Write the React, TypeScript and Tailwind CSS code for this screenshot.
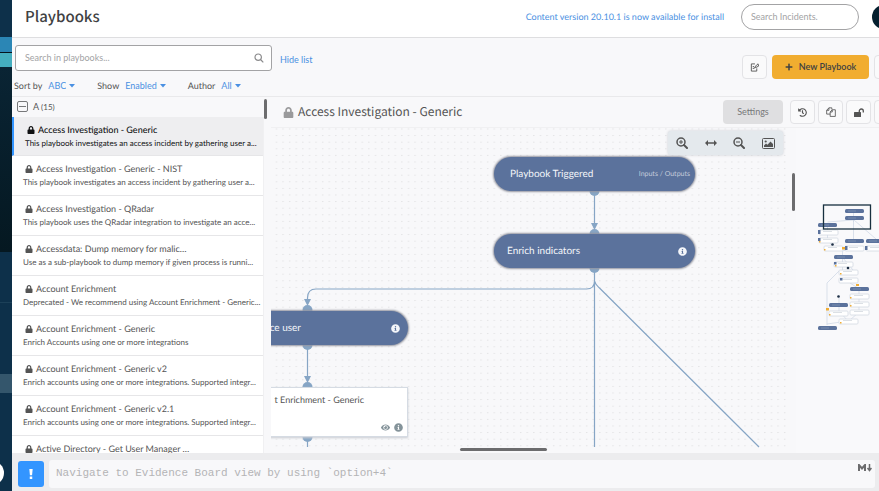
import { FaLock, FaHistory, FaPlus, FaInfoCircle, FaEye } from "react-icons/fa";
import type { ReactNode } from "react";

const playbooks = [
  { name: "Access Investigation - Generic", text: "This playbook investigates an access incident by gathering user a..." },
  { name: "Access Investigation - Generic - NIST", text: "This playbook investigates an access incident by gathering user a..." },
  { name: "Access Investigation - QRadar", text: "This playbook uses the QRadar integration to investigate an acce..." },
  { name: "Accessdata: Dump memory for malic…", text: "Use as a sub-playbook to dump memory if given process is runni..." },
  { name: "Account Enrichment", text: "Deprecated - We recommend using Account Enrichment - Generic..." },
  { name: "Account Enrichment - Generic", text: "Enrich Accounts using one or more integrations" },
  { name: "Account Enrichment - Generic v2", text: "Enrich accounts using one or more integrations. Supported integr..." },
  { name: "Account Enrichment - Generic v2.1", text: "Enrich accounts using one or more integrations. Supported integr..." },
  { name: "Active Directory - Get User Manager …", text: "" },
];

function Filter({ label, value, options }: { label: string; value: string; options: string[] }) {
  return (
    <label className="flex items-center gap-[6px] whitespace-nowrap">
      {label}
      <span className="flex items-center gap-[3px] text-[#4a90e2]">
        <select defaultValue={value} className="cursor-pointer appearance-none bg-transparent [field-sizing:content]">
          {options.map((o) => (
            <option key={o}>{o}</option>
          ))}
        </select>
        <svg viewBox="0 0 6 4" className="h-1 w-[6px]" fill="currentColor" aria-hidden="true">
          <path d="M0 0h6L3 3.600z" />
        </svg>
      </span>
    </label>
  );
}

function IconButton({ label, children }: { label: string; children: ReactNode }) {
  return (
    <button aria-label={label} className="flex h-6 w-[25px] shrink-0 items-center justify-center rounded-sm border border-[#e3e3e6] bg-[#fafafb] text-[#545454]">
      {children}
    </button>
  );
}

function Magnifier({ plus }: { plus?: boolean }) {
  return (
    <svg viewBox="0 0 12 12" className="size-3" fill="none" stroke="currentColor">
      <circle cx="5" cy="5" r="4" strokeWidth="1.5" />
      <path d="M8 8l3 3" strokeWidth="2" strokeLinecap="round" />
      <path d={plus ? "M3 5h4M5 3v4" : "M3 5h4"} />
    </svg>
  );
}

const miniBlue = [[845, 209], [845, 216], [818, 223], [845, 239], [866, 239], [834, 255], [850, 287], [829, 303], [818, 326]];
const miniWhite = [[819, 230], [819, 238], [824, 246], [845, 246], [866, 246], [834, 262], [839, 270], [839, 278], [850, 294], [850, 302], [850, 310], [829, 311], [839, 319]];

function MiniMap() {
  return (
    <svg viewBox="796 128 83 325" className="block h-[325px] w-[83px]" role="img" aria-label="Playbook overview">
      <g fill="none" stroke="#ccd6e4" strokeWidth="0.7">
        <path d="M853.500 210v12M827.500 225v15l5 6M853.500 220l-26 2M853.500 220v22M854 220l22 19M853.500 248l-11 3v20M843 258l10 12M839 271l-12 12v42M850 283l8 5M839 295v16l9 10-21 3M859 290v22l-10 9" />
      </g>
      {miniWhite.map(([x, y]) => (
        <g key={`${x}-${y}`}>
          <rect x={x} y={y} width="19" height="5" rx="1" fill="#fff" stroke="#d3d9e2" strokeWidth="0.8" />
          <path d={`M${x + 4} ${y + 1.5}h9`} stroke="#c5cbd3" strokeWidth="0.6" />
        </g>
      ))}
      {miniBlue.map(([x, y]) => (
        <g key={`${x}-${y}`}>
          <rect x={x} y={y} width="19" height="4" rx="1.5" fill="#5b729c" />
          <path d={`M${x + 3} ${y + 2}h8`} stroke="#8fa0be" strokeWidth="0.6" />
        </g>
      ))}
      <g fill="#5b729c">
        <rect x="818" y="230" width="2.5" height="4" />
        <rect x="818" y="238" width="2.5" height="3" />
        <rect x="845" y="246" width="2.5" height="4" />
        <rect x="865" y="246" width="2.5" height="4" />
        <rect x="834" y="262" width="2.5" height="2.5" />
        <rect x="840" y="278" width="2.5" height="2.5" />
      </g>
      <g fill="#f0ad35">
        <rect x="842" y="247" width="3" height="2.5" />
        <rect x="856" y="284" width="3" height="2" />
        <rect x="826" y="308" width="3" height="2.5" />
        <rect x="819" y="241" width="1.5" height="1.5" />
        <rect x="824" y="249" width="1.5" height="1.5" />
        <rect x="835" y="265" width="1.5" height="1.5" />
        <rect x="840" y="273" width="1.5" height="1.5" />
        <rect x="850" y="297" width="1.5" height="1.5" />
        <rect x="850" y="305" width="1.5" height="1.5" />
        <rect x="829" y="314" width="1.5" height="1.5" />
        <rect x="840" y="322" width="1.5" height="1.5" />
      </g>
      <g fill="#1d2f45">
        <circle cx="832.5" cy="244.5" r="1.3" />
        <circle cx="848" cy="268" r="1.3" />
        <circle cx="838.5" cy="296.5" r="1.3" />
      </g>
      <rect x="823.5" y="205" width="47" height="24" fill="none" stroke="#17303f" strokeWidth="1.3" />
    </svg>
  );
}

function Wires() {
  return (
    <svg viewBox="271 128 525 325" className="block h-[325px] w-[525px]" aria-hidden="true">
      <defs>
        <pattern id="dots" x="271" y="128.5" width="6.6" height="6.6" patternUnits="userSpaceOnUse">
          <rect x="5" y="0" width="1" height="1" fill="#d8d8da" />
        </pattern>
      </defs>
      <rect x="271" y="128" width="519" height="320" fill="url(#dots)" />
      <g fill="none" stroke="#86a5c5" strokeWidth="1.2">
        <path d="M594.5 190v38M594.5 267v180M594.5 281q0 8-8 8H316q-8.500 0-8.500 9v5M594.5 281c1 4 3 5 5 7L759 447M307.5 344v36M307.5 437v10" />
      </g>
      <g fill="#86a5c5">
        <path d="M591 223h7l-3.500 7zM304 299h7l-3.500 7zM304 376h7l-3.500 7z" />
        <circle cx="594.5" cy="191" r="5" />
        <circle cx="594.5" cy="234" r="5" />
        <circle cx="594.5" cy="268" r="5" />
        <circle cx="307.5" cy="310" r="5" />
        <circle cx="307.5" cy="345" r="5" />
        <circle cx="307.5" cy="387" r="5" />
        <circle cx="307.5" cy="437" r="5" />
      </g>
    </svg>
  );
}

export default function App() {
  return (
    <div className="flex h-screen overflow-hidden bg-[#f8f8fa] font-['Lato',sans-serif] text-[9px] leading-4 text-[#545454] [text-rendering:geometricPrecision]">
      <nav aria-label="Main" className="flex w-3 shrink-0 flex-col overflow-hidden bg-[#0d304a]">
        <div className="h-[37px]" />
        <div className="h-[15px] bg-[#2b86b5]" />
        <div className="h-px bg-[#06131d]" />
        <div className="h-[14px] bg-[#45aebf]" />
        <div className="h-[185px] bg-linear-to-b from-[#0a2434] to-[#051821]" />
        <div className="h-[51px] border-b border-[#1c4058]" />
        <div className="h-[71px]" />
        <div className="h-[19px] bg-[#34566c]" />
        <div className="mt-[68px] -ml-5 size-6 rounded-full bg-white" />
      </nav>

      <div className="flex min-w-0 flex-1 flex-col">
        <header className="flex h-[38px] shrink-0 items-center border-b border-[#dedee0] bg-white pb-1 pl-[13px]">
          <h1 className="flex-1 font-['Noto_Sans_CJK_SC',sans-serif] text-[15px] font-medium text-[#404142]">Playbooks</h1>
          <a href="#install" className="mr-[17px] text-[#4a90e2]">Content version 20.10.1 is now available for install</a>
          <input
            aria-label="Search Incidents"
            placeholder="Search Incidents."
            className="h-[26px] w-[118px] rounded-full border border-[#a3a3a5] px-[9px] placeholder:text-[#a3a3a5]"
          />
          <div className="ml-[13px] w-[7px] shrink-0 overflow-hidden">
            <div className="size-6 rounded-full bg-[#05202f]" />
          </div>
        </header>

        <section className="flex h-[59px] shrink-0 items-start border-b border-[#e9e9eb] pt-[7px]">
          <div className="ml-[3px] w-[257px]">
            <div className="flex h-[26px] items-center rounded-[3px] border border-[#a3a3a5] bg-white pr-[7px] pl-[9px]">
              <input aria-label="Search in playbooks" placeholder="Search in playbooks..." className="min-w-0 flex-1 outline-none placeholder:text-[#a3a3a5]" />
              <svg viewBox="0 0 10 10" className="size-[10px] text-[#8a8a8c]" fill="none" stroke="currentColor" strokeWidth="1.2">
                <circle cx="4.2" cy="4.2" r="3.2" />
                <path d="M6.5 6.5l2.800 2.800" />
              </svg>
            </div>
            <div className="-ml-px flex gap-[22px] pt-[7px]">
              <Filter label="Sort by" value="ABC" options={["ABC", "Date"]} />
              <Filter label="Show" value="Enabled" options={["Enabled", "All"]} />
              <Filter label="Author" value="All" options={["All", "Me"]} />
            </div>
          </div>
          <button className="mt-[7px] ml-2 text-[#4a90e2]">Hide list</button>
          <div className="mt-[10px] -mr-5 ml-auto flex gap-[5px]">
            <IconButton label="Edit report">
              <svg viewBox="0 0 10 10" className="size-[9px]" fill="none" stroke="currentColor">
                <path d="M5.5 1H1.500v8h6V6M3 4h1.500M3 6h2" />
                <path d="M5 5l2.500-3L9 1l.5 2.500L6.500 5z" />
              </svg>
            </IconButton>
            <button className="flex h-6 w-[97px] items-center justify-center gap-[6px] rounded-sm bg-[#f1ad30] font-semibold text-[#404142]">
              <FaPlus size={8} />
              New Playbook
            </button>
            <IconButton label="More">{null}</IconButton>
          </div>
        </section>

        <div className="flex min-h-0 flex-1">
          <aside className="relative w-[259px] shrink-0 overflow-hidden pr-[7px]">
            <button className="flex h-5 items-center gap-[5px] pb-px pl-[5px]">
              <span className="flex size-[11px] items-center justify-center rounded-[2px] border border-[#77787a]">
                <span className="h-px w-[7px] bg-[#77787a]" />
              </span>
              <span>A <span className="text-[8px]">(15)</span></span>
            </button>
            <ul className="border-r border-[#f0f0f2]">
              {playbooks.map((p, i) => (
                <li
                  key={p.name}
                  className={
                    i === 0
                      ? "h-[39px] border-b border-l-2 border-b-[#e6e6e8] border-l-[#3395ff] bg-[#eeeef0] pl-[11px] text-[#101112]"
                      : "h-10 border-b border-[#e6e6e8] bg-white pl-[11px]"
                  }
                >
                  <a href="#playbook" className="block pt-[5px] whitespace-nowrap">
                    <span className="flex items-center gap-[3px] pl-[2px]">
                      <FaLock size={8} className="shrink-0" />
                      <span className={i === 0 ? "font-medium" : ""}>{p.name}</span>
                    </span>
                    <span className="block text-[8px] leading-[10px]">{p.text}</span>
                  </a>
                </li>
              ))}
            </ul>
            <div className="absolute top-[2px] right-1 h-5 w-[3px] rounded-full bg-[#6c6c6e]" />
          </aside>

          <main className="flex min-w-0 flex-1 flex-col">
            <div className="-mr-5 flex h-[31px] shrink-0 items-center gap-[3px] border-b border-[#f0f0f2] pl-3">
              <FaLock size={11} className="text-[#9a9a9c]" />
              <h2 className="ml-px flex-1 font-['Noto_Sans_CJK_SC',sans-serif] text-[12px]">Access Investigation - Generic</h2>
              <button className="mr-1 h-6 w-[60px] rounded-sm bg-[#dfdfe1] text-[#77787a]">Settings</button>
              <IconButton label="History"><FaHistory size={9} /></IconButton>
              <IconButton label="Duplicate">
                <svg viewBox="0 0 12 12" className="size-[10px]" fill="none" stroke="currentColor">
                  <path d="M5 8.500H.8V4L3.500 1H7v2M3.500 1v3H.8M5 6l2.500-2.700h3.700v8H5zM7.500 3.500V6H5" />
                </svg>
              </IconButton>
              <IconButton label="Unlock">
                <svg viewBox="0 0 10 9" className="h-[9px] w-[10px]" fill="currentColor">
                  <rect x="0" y="4" width="7" height="5" rx="0.5" />
                  <path d="M5.300 4.500V3a2 2 0 0 1 4 0v1.500" fill="none" stroke="currentColor" strokeWidth="1.3" />
                </svg>
              </IconButton>
              <IconButton label="More actions">{null}</IconButton>
            </div>

            <div className="flex min-h-0 flex-1 overflow-hidden">
              <div className="relative min-w-0 flex-1 overflow-hidden">
                <Wires />
                <div className="absolute top-[29px] left-[223px] flex h-[34px] w-[201px] items-center justify-between rounded-full bg-[#5b729c] pr-[5px] pl-4 text-[#f4f6fa] shadow-[0_0_2px_1px_#9496a0]">
                  <span className="text-[10px]">Playbook Triggered</span>
                  <span className="text-[7px] text-[#c3cbdb]">Inputs / Outputs</span>
                </div>
                <div className="absolute top-[106px] left-[223px] flex h-[34px] w-[201px] items-center justify-between rounded-full bg-[#5b729c] pr-2 pl-[13px] text-[#f4f6fa] shadow-[0_0_2px_1px_#9496a0]">
                  <span className="text-[10px]">Enrich indicators</span>
                  <FaInfoCircle size={9} />
                </div>
                <div className="absolute top-[183px] left-[-64px] flex h-[34px] w-[201px] items-center justify-between rounded-full bg-[#5b729c] pr-2 text-[#f4f6fa] shadow-[0_0_2px_1px_#9496a0]">
                  <span className="w-[94px] text-right text-[10px] whitespace-nowrap">ce user</span>
                  <FaInfoCircle size={9} />
                </div>
                <div className="absolute top-[259px] left-[-64px] flex h-[50px] w-[201px] flex-col justify-between border border-[#d5dbe3] bg-white pt-1 pr-1 pb-1 shadow-[0_1px_2px_#c9ccd2]">
                  <span className="w-[156px] text-right">t Enrichment - Generic</span>
                  <span className="flex justify-end gap-1 text-[#84939a]">
                    <FaEye size={9} />
                    <FaInfoCircle size={9} />
                  </span>
                </div>
                <div className="absolute top-[3px] left-[397px] flex h-6 w-[115px] items-center justify-between rounded-[3px] bg-[#e4e9ed] px-2 text-[#545454] shadow-[0_0_3px_#c9ccd2]">
                  <button aria-label="Zoom in"><Magnifier plus /></button>
                  <button aria-label="Fit width">
                    <svg viewBox="0 0 12 6" className="h-[6px] w-3" fill="currentColor">
                      <path d="M0 3l3-3v2.200h6V0l3 3-3 3V3.800H3V6z" />
                    </svg>
                  </button>
                  <button aria-label="Zoom out"><Magnifier /></button>
                  <button aria-label="Save image">
                    <svg viewBox="0 0 13 11" className="h-[11px] w-[13px]" fill="currentColor">
                      <rect x="0.5" y="0.5" width="12" height="10" rx="1" fill="none" stroke="currentColor" />
                      <circle cx="3.7" cy="3.5" r="1.1" />
                      <path d="M2 9V7.500l2-2 1.500 1.300L8.500 3.500 11 6v3z" />
                    </svg>
                  </button>
                </div>
                <div className="absolute top-[45px] right-px h-[38px] w-[3px] rounded-full bg-[#6c6c6e]" />
                <div className="absolute top-[320px] left-[189px] h-[3px] w-[87px] rounded-full bg-[#6c6c6e]" />
              </div>
              <div className="w-[83px] shrink-0 bg-[#f9f9fb]">
                <MiniMap />
              </div>
            </div>
          </main>
        </div>

        <footer className="flex h-[38px] shrink-0 items-center gap-[5px] bg-[#ececee] pt-[6px] pr-1 pb-[3px] pl-[6px]">
          <button aria-label="Run command" className="flex h-[26px] w-[26px] shrink-0 items-center justify-center rounded-[3px] bg-[#3395ff] text-white">
            <svg viewBox="0 0 4 12" className="h-[10px] w-1" fill="currentColor">
              <path d="M0 0h4l-.7 7.500H.7zM.5 9h3v3h-3z" />
            </svg>
          </button>
          <div className="flex h-7 flex-1 rounded-[3px] bg-[#f8f8fa] pr-[3px] pl-[7px]">
            <input
              aria-label="Command line"
              placeholder="Navigate to Evidence Board view by using `option+4`"
              className="min-w-0 flex-1 pb-px font-['Liberation_Mono',monospace] text-[11px] outline-none placeholder:text-[#b4b4b6]"
            />
            <svg viewBox="0 0 14 8" className="mt-1 h-2 w-[14px] text-[#6c6c6e]" fill="none" stroke="currentColor" strokeWidth="2">
              <path d="M1 7V1l3 3.500L7 1v6" />
              <path d="M11.500 0v5M9.500 4l2 2.500 2-2.500" strokeWidth="1.5" />
            </svg>
          </div>
        </footer>
      </div>
    </div>
  );
}
